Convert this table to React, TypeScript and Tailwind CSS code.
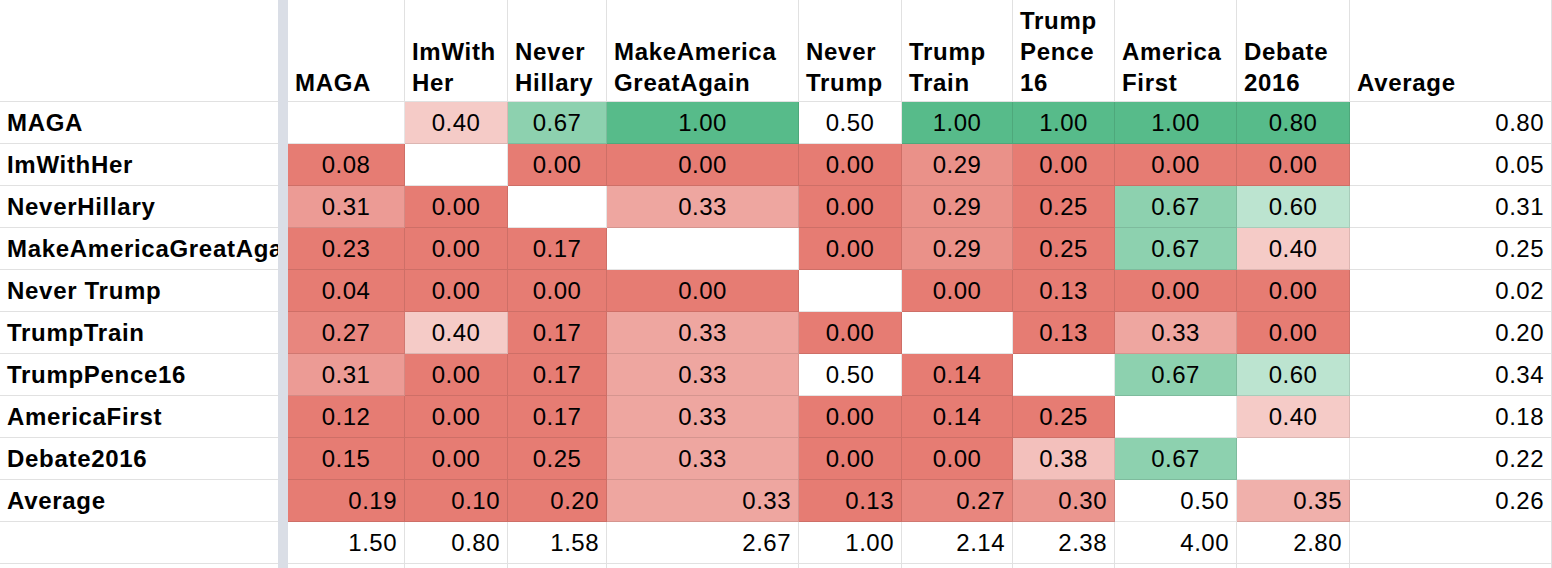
import React from "react";

const headers: string[][] = [
  ["MAGA"],
  ["ImWith", "Her"],
  ["Never", "Hillary"],
  ["MakeAmerica", "GreatAgain"],
  ["Never", "Trump"],
  ["Trump", "Train"],
  ["Trump", "Pence", "16"],
  ["America", "First"],
  ["Debate", "2016"],
  ["Average"],
];

type Row = { label: string; values: (number | null)[]; avg: number | null };

// null = diagonal (blank cell)
const rows: Row[] = [
  { label: "MAGA", values: [null, 0.4, 0.67, 1, 0.5, 1, 1, 1, 0.8], avg: 0.8 },
  { label: "ImWithHer", values: [0.08, null, 0, 0, 0, 0.29, 0, 0, 0], avg: 0.05 },
  { label: "NeverHillary", values: [0.31, 0, null, 0.33, 0, 0.29, 0.25, 0.67, 0.6], avg: 0.31 },
  { label: "MakeAmericaGreatAgain", values: [0.23, 0, 0.17, null, 0, 0.29, 0.25, 0.67, 0.4], avg: 0.25 },
  { label: "Never Trump", values: [0.04, 0, 0, 0, null, 0, 0.13, 0, 0], avg: 0.02 },
  { label: "TrumpTrain", values: [0.27, 0.4, 0.17, 0.33, 0, null, 0.13, 0.33, 0], avg: 0.2 },
  { label: "TrumpPence16", values: [0.31, 0, 0.17, 0.33, 0.5, 0.14, null, 0.67, 0.6], avg: 0.34 },
  { label: "AmericaFirst", values: [0.12, 0, 0.17, 0.33, 0, 0.14, 0.25, null, 0.4], avg: 0.18 },
  { label: "Debate2016", values: [0.15, 0, 0.25, 0.33, 0, 0, 0.38, 0.67, null], avg: 0.22 },
];

const averages = [0.19, 0.1, 0.2, 0.33, 0.13, 0.27, 0.3, 0.5, 0.35];
const totals = [1.5, 0.8, 1.58, 2.67, 1, 2.14, 2.38, 4, 2.8];

const RED = [230, 124, 115];
const WHITE = [255, 255, 255];
const GREEN = [87, 187, 138];

// sheet-style colour scale: red up to 0.25, white at 0.5, green from 0.75
function scaleColor(v: number) {
  const mix = (a: number[], b: number[], t: number) =>
    `rgb(${a.map((c, i) => Math.round(c + (b[i] - c) * t)).join(",")})`;
  if (v <= 0.5) {
    const t = Math.min(Math.max((v - 0.25) / 0.25, 0), 1);
    return mix(RED, WHITE, t);
  }
  const t = Math.min(Math.max((v - 0.5) / 0.25, 0), 1);
  return mix(WHITE, GREEN, t);
}

const font = "font-['Liberation_Sans',Arial,sans-serif] text-[24px] text-black";

function Label({ text }: { text: string }) {
  return (
    <div className="flex items-center overflow-hidden whitespace-nowrap border-b border-[#e1e1e1] px-[7px] font-bold tracking-[0.7px]">
      {text}
    </div>
  );
}

function ValueCell({
  value,
  align = "center",
  colored = true,
}: {
  value: number | null;
  align?: "center" | "right";
  colored?: boolean;
}) {
  return (
    <div
      className={`flex items-center border-b border-r border-black/10 px-[7px] tracking-[0.5px] ${
        align === "right" ? "justify-end" : "justify-center"
      }`}
      style={
        colored && value !== null ? { backgroundColor: scaleColor(value) } : undefined
      }
    >
      {value !== null ? value.toFixed(2) : ""}
    </div>
  );
}

function PlainCell({ value }: { value: number | null }) {
  return (
    <div className="flex items-center justify-end border-b border-r border-[#e1e1e1] px-[7px] tracking-[0.5px]">
      {value !== null ? value.toFixed(2) : ""}
    </div>
  );
}

export default function App() {
  return (
    <div className={`h-[568px] w-[1552px] overflow-hidden bg-white ${font}`}>
      <div className="grid grid-cols-[278px_10px_117px_103px_99px_192px_103px_111px_102px_122px_113px_1fr] grid-rows-[102px_repeat(12,42px)]">
        {/* frozen column divider */}
        <div className="col-start-2 row-span-full bg-[#dadee6]" />

        {/* header row */}
        <div className="col-start-1 row-start-1 border-b border-[#e1e1e1]" />
        {headers.map((lines, i) => (
          <div
            key={i}
            className="row-start-1 flex flex-col justify-end border-b border-r border-[#e1e1e1] px-[7px] pb-[3px] font-bold leading-[31px] tracking-[0.7px]"
          >
            {lines.map((l) => (
              <span key={l}>{l}</span>
            ))}
          </div>
        ))}

        {/* matrix rows */}
        {rows.map((r) => (
          <React.Fragment key={r.label}>
            <Label text={r.label} />
            {r.values.map((v, j) => (
              <ValueCell key={j} value={v} />
            ))}
            <PlainCell value={r.avg} />
          </React.Fragment>
        ))}

        {/* averages */}
        <Label text="Average" />
        {averages.map((v, j) => (
          <ValueCell key={j} value={v} align="right" />
        ))}
        <PlainCell value={0.26} />

        {/* column totals */}
        <Label text="" />
        {totals.map((v, j) => (
          <PlainCell key={j} value={v} />
        ))}
        <PlainCell value={null} />

        {/* next empty row */}
        <div className="border-b border-[#e1e1e1]" />
        {Array.from({ length: 10 }).map((_, j) => (
          <div key={j} className="border-b border-r border-[#e1e1e1]" />
        ))}
      </div>
    </div>
  );
}
